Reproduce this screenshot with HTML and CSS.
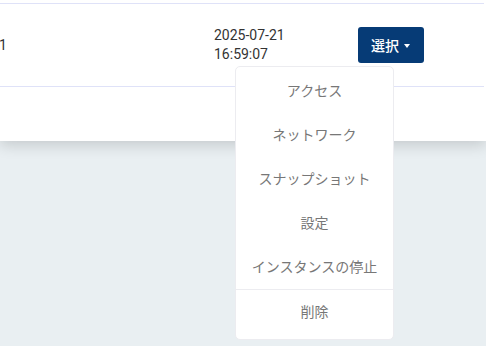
FILE: index.html
```html
<!DOCTYPE html>
<html lang="ja">
  <head>
    <meta charset="UTF-8" />
    <meta name="viewport" content="width=device-width, initial-scale=1.0" />
    <title>Instances</title>
    <link rel="stylesheet" href="styles.css">
  </head>
  <body>
    <div class="card">
      <div class="row">
        <div class="cell-id">1</div>
        <div class="cell-date">2025-07-21<br />16:59:07</div>
        <div class="action">
          <button class="select-btn">選択 <span class="caret"></span></button>
          <ul class="dropdown">
            <li>アクセス</li>
            <li>ネットワーク</li>
            <li>スナップショット</li>
            <li>設定</li>
            <li>インスタンスの停止</li>
            <li class="divider"></li>
            <li>削除</li>
          </ul>
        </div>
      </div>
    </div>
  </body>
</html>
```

FILE: styles.css
```css
html,
body {
  height: 100%;
}

body {
  margin: 0;
  background: #e9eff2;
  font-family: Roboto, "Noto Sans CJK JP", sans-serif;
  font-size: 14px;
  color: #333;
}

/* ========== Card ========== */
.card {
  background: #fff;
  padding-top: 3px;
  height: 138px;
  box-shadow: 0 4px 14px rgba(0, 0, 0, 0.16);
  position: relative;
  z-index: 1;
}

.row {
  display: flex;
  align-items: center;
  height: 82px;
  border-top: 1px solid #dfe2f8;
  border-bottom: 1px solid #dfe2f8;
  margin-right: 2px;
}

.cell-id {
  width: 215px;
  line-height: 20px;
  margin-left: -1px;
}

.cell-date {
  width: 144px;
  line-height: 19px;
}

/* ========== Action ========== */
.action {
  position: relative;
}

.select-btn {
  display: flex;
  align-items: center;
  gap: 5px;
  height: 36px;
  padding: 0 14px 0 13px;
  border: none;
  border-radius: 3px;
  background: #063b76;
  color: #fff;
  font-family: Roboto, "Noto Sans CJK JP", sans-serif;
  font-size: 14px;
  font-weight: 500;
  cursor: pointer;
}

.caret {
  width: 0;
  height: 0;
  border-left: 3px solid transparent;
  border-right: 3px solid transparent;
  border-top: 4px solid #fff;
  margin-top: 1px;
}

/* ========== Dropdown ========== */
.dropdown {
  position: absolute;
  top: 39px;
  left: -123px;
  width: 157px;
  margin: 0;
  padding: 2px 0 5px;
  list-style: none;
  background: #fff;
  border: 1px solid #ececf0;
  border-radius: 5px;
  z-index: 10;
}

.dropdown li {
  height: 44px;
  line-height: 44px;
  text-align: center;
  color: #777;
  cursor: pointer;
}

.dropdown li.divider {
  height: 0;
  border-top: 1px solid #ececf0;
}
```
